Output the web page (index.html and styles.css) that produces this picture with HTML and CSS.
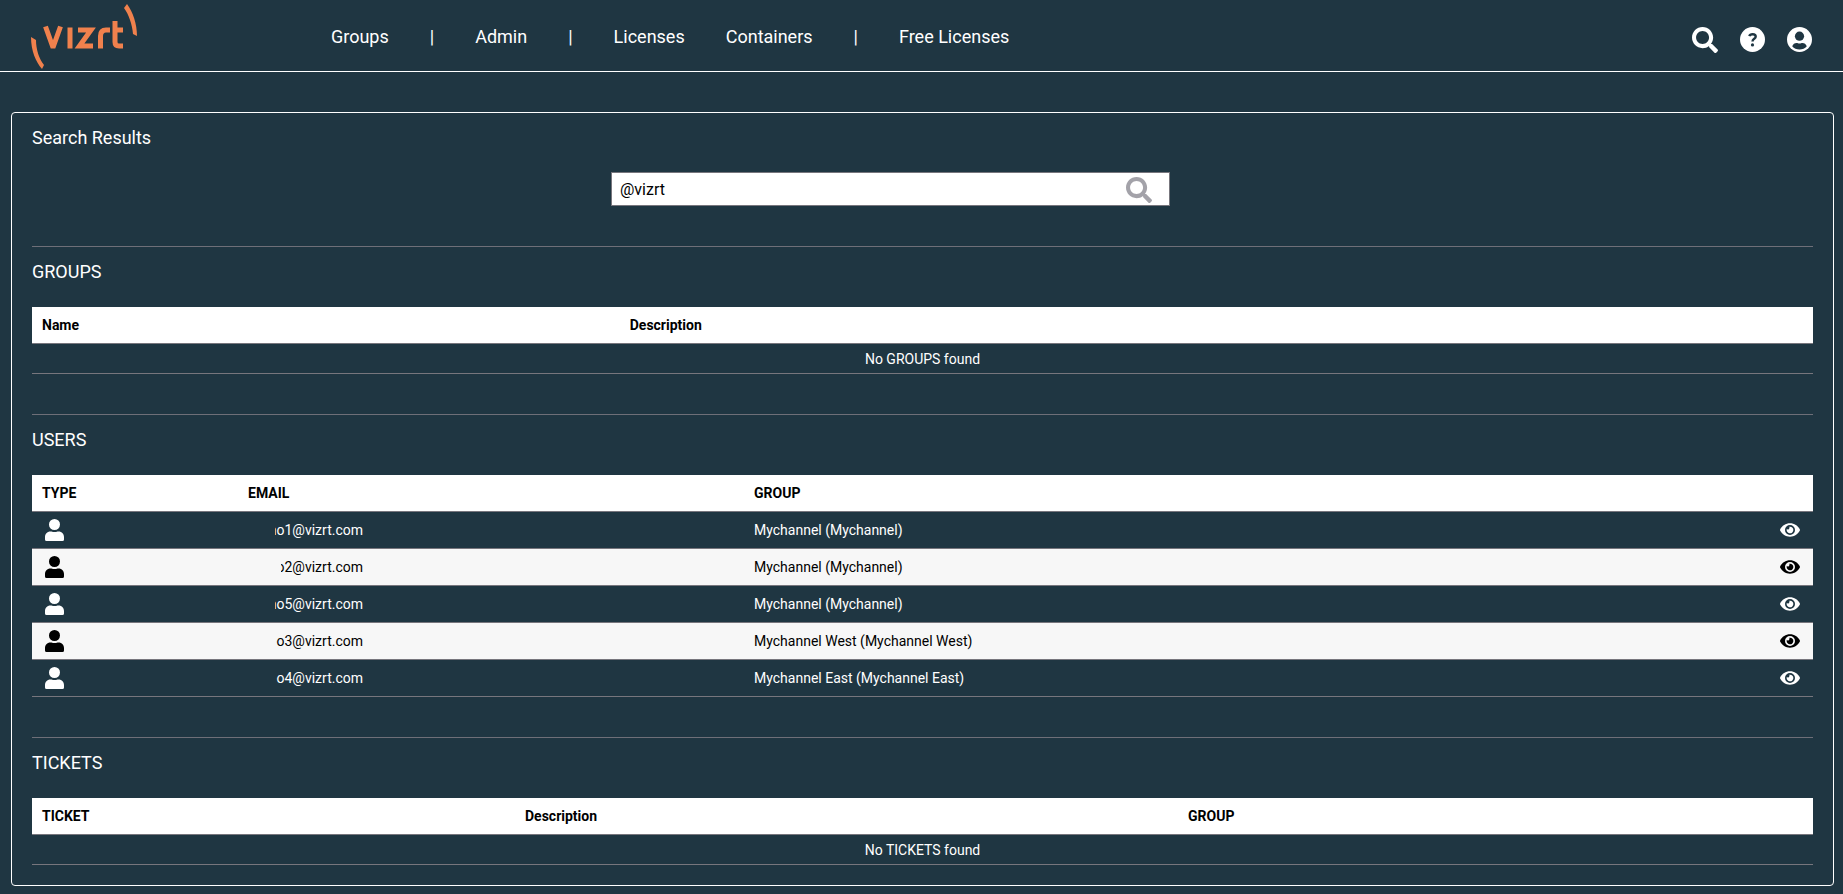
FILE: index.html
```
<!DOCTYPE html>
<html lang="en">
<head>
<meta charset="utf-8">
<title>Search Results</title>
<link rel="stylesheet" href="styles.css">
</head>
<body>
<svg class="sprite" aria-hidden="true">
  <symbol id="search" viewBox="0 0 512 512"><path d="M505 442.700L405.300 343c-4.500-4.500-10.600-7-17-7H372c27.600-35.300 44-79.700 44-128C416 93.100 322.900 0 208 0S0 93.100 0 208s93.100 208 208 208c48.300 0 92.700-16.400 128-44v16.300c0 6.400 2.500 12.500 7 17l99.700 99.700c9.400 9.400 24.600 9.400 33.900 0l28.300-28.300c9.400-9.400 9.400-24.600.1-34zM208 336c-70.700 0-128-57.200-128-128 0-70.700 57.200-128 128-128 70.700 0 128 57.200 128 128 0 70.700-57.200 128-128 128z"/></symbol>
  <symbol id="help" viewBox="0 0 25 25"><circle cx="12.500" cy="12.500" r="12.500"/><path class="cut-line" d="M9.300 9.200C9.800 7.700 11 7.200 12.600 7.200C14.500 7.200 15.700 8.200 15.700 9.700C15.700 11.800 12.500 11.900 12.500 14.400"/><circle class="cut" cx="12.500" cy="17.900" r="1.600"/></symbol>
  <symbol id="account" viewBox="0 0 25 25"><circle cx="12.500" cy="12.500" r="12.500"/><circle class="cut" cx="12.500" cy="9.200" r="4.600"/><path class="cut" d="M5.200 19.300C6 17.200 7.600 16 9.600 16C10.600 16 11.200 16.500 12.500 16.500S14.400 16 15.400 16C17.400 16 19 17.200 19.800 19.300C18 21.500 15.400 22.600 12.500 22.600S7 21.500 5.200 19.300z"/></symbol>
  <symbol id="person" viewBox="0 0 19 22"><circle cx="9.500" cy="5.500" r="5.500"/><path d="M5.500 12.400H6.500Q9.500 13.600 12.500 12.400H13.500C17 12.400 19 15 19 18V20.500Q19 22 17.500 22H1.500Q0 22 0 20.500V18C0 15 2 12.400 5.500 12.400z"/></symbol>
  <symbol id="eye" viewBox="0 0 576 400"><path fill-rule="evenodd" d="M572.500 185.400C518.300 79.600 410.900 8 288 8S57.700 79.600 3.500 185.400a32.400 32.400 0 0 0 0 29.200C57.700 320.400 165.100 392 288 392s230.300-71.600 284.500-177.400a32.400 32.400 0 0 0 0-29.200zM288 344a144 144 0 1 1 144-144 143.900 143.900 0 0 1-144 144zm0-240a95.300 95.300 0 0 0-25.300 3.800 47.900 47.900 0 0 1-66.900 66.900A95.800 95.800 0 1 0 288 104z"/></symbol>
</svg>

<header class="topbar">
  <a class="logo" href="#" aria-label="vizrt">
    <svg viewBox="0 0 106 66" width="106" height="66" aria-hidden="true">
      <path class="logo-fill" d="M0 33L5 36C5 45 8 55 13 61L11 65C5 58 0 47 0 33zM96 0C102 8 106 20 106 32L102 30C101 20 98 11 93 4z"/>
      <path class="logo-line" d="M14.500 22.500L21.500 42H22.500L29.500 22.500M39 23.500V44.500M47 26H60L48.500 42H62M69.500 44.500V32Q69.500 26 75 26H79M84 17V38Q84 42 88 42H92M84 26H92"/>
    </svg>
  </a>
  <nav class="nav">
    <a href="#">Groups</a><span>|</span><a href="#">Admin</a><span>|</span><a href="#">Licenses</a><a href="#">Containers</a><span>|</span><a href="#">Free Licenses</a>
  </nav>
  <div class="tools">
    <button type="button" aria-label="Search"><svg width="26" height="26"><use href="#search"/></svg></button>
    <button type="button" aria-label="Help"><svg width="25" height="25"><use href="#help"/></svg></button>
    <button type="button" aria-label="Account"><svg width="25" height="25"><use href="#account"/></svg></button>
  </div>
</header>

<main class="panel">
  <h1>Search Results</h1>
  <form class="search">
    <div class="search-box">
      <input type="text" value="@vizrt" aria-label="Search text">
      <button type="button" aria-label="Search"><svg width="26" height="26"><use href="#search"/></svg></button>
    </div>
  </form>

  <section>
    <h2>GROUPS</h2>
    <table class="groups">
      <thead><tr><th>Name</th><th>Description</th></tr></thead>
      <tbody><tr class="empty"><td colspan="2">No GROUPS found</td></tr></tbody>
    </table>
  </section>

  <section>
    <h2>USERS</h2>
    <table class="users">
      <thead><tr><th>TYPE</th><th>EMAIL</th><th>GROUP</th><th></th></tr></thead>
      <tbody>
        <tr><td><svg class="person"><use href="#person"/></svg></td><td><div class="email"><span class="w88">no1@vizrt.com</span></div></td><td>Mychannel (Mychannel)</td><td><button type="button" aria-label="View"><svg class="eye"><use href="#eye"/></svg></button></td></tr>
        <tr><td><svg class="person"><use href="#person"/></svg></td><td><div class="email"><span class="w82">o2@vizrt.com</span></div></td><td>Mychannel (Mychannel)</td><td><button type="button" aria-label="View"><svg class="eye"><use href="#eye"/></svg></button></td></tr>
        <tr><td><svg class="person"><use href="#person"/></svg></td><td><div class="email"><span class="w88">no5@vizrt.com</span></div></td><td>Mychannel (Mychannel)</td><td><button type="button" aria-label="View"><svg class="eye"><use href="#eye"/></svg></button></td></tr>
        <tr><td><svg class="person"><use href="#person"/></svg></td><td><div class="email"><span>o3@vizrt.com</span></div></td><td>Mychannel West (Mychannel West)</td><td><button type="button" aria-label="View"><svg class="eye"><use href="#eye"/></svg></button></td></tr>
        <tr><td><svg class="person"><use href="#person"/></svg></td><td><div class="email"><span>o4@vizrt.com</span></div></td><td>Mychannel East (Mychannel East)</td><td><button type="button" aria-label="View"><svg class="eye"><use href="#eye"/></svg></button></td></tr>
      </tbody>
    </table>
  </section>

  <section>
    <h2>TICKETS</h2>
    <table class="tickets">
      <thead><tr><th>TICKET</th><th>Description</th><th>GROUP</th></tr></thead>
      <tbody><tr class="empty"><td colspan="3">No TICKETS found</td></tr></tbody>
    </table>
  </section>
</main>
</body>
</html>
```
FILE: styles.css
```
* { box-sizing: border-box; }
body {
  margin: 0;
  background: #1f3642;
  color: #fff;
  font: 14px/20px Roboto, "Liberation Sans", sans-serif;
}
.sprite { position: absolute; width: 0; height: 0; }
svg { display: block; fill: currentColor; }
button { padding: 0; border: 0; background: none; color: inherit; }
.cut { fill: #1f3642; }
.cut-line { fill: none; stroke: #1f3642; stroke-width: 2.400; }

.topbar {
  display: flex;
  height: 72px;
  padding: 4px 31px 0;
  border-bottom: 1px solid #fff;
}
.logo-fill { fill: #f0814d; }
.logo-line { fill: none; stroke: #f0814d; stroke-width: 5; }
.nav {
  display: flex;
  gap: 41px;
  margin: 20px 0 0 194px;
  font-size: 18px;
  line-height: 26px;
}
.nav a { color: inherit; text-decoration: none; }
.tools { display: flex; gap: 22px; margin: 23px 0 0 auto; align-items: flex-start; }

.panel {
  margin: 40px 9px 9px 11px;
  padding: 12px 20px 20px;
  border: 1px solid #fff;
  border-radius: 4px;
}
h1, h2 { margin: 0; font-size: 18px; font-weight: 400; line-height: 26px; }
.search { padding: 21px 64px 40px 0; }
.search-box {
  display: flex;
  align-items: center;
  width: 559px;
  height: 34px;
  margin: 0 auto;
  padding: 1px 17px 0 0;
  background: #fff;
  border: 1px solid #77767d;
}
.search-box input {
  flex: 1;
  height: 30px;
  padding: 0 8px;
  border: 0;
  outline: 0;
  background: none;
  color: #000;
  font: 16px/24px Roboto, "Liberation Sans", sans-serif;
}
.search-box button { color: #a3a2a9; }

section { padding-top: 12px; border-top: 1px solid #6e6f78; }
section + section { margin-top: 40px; }
h2 { margin-bottom: 22px; }
table { width: 100%; table-layout: fixed; border-collapse: separate; border-spacing: 0; }
th, td { padding: 0 10px; border-bottom: 1px solid #77767d; text-align: left; }
th { height: 37px; background: #fff; color: #000; font-weight: 700; }
td { height: 37px; }
.empty td { height: 30px; text-align: center; }
.users tbody tr:nth-child(even) { background: #f7f7f7; color: #000; }
.users td:last-child button { display: block; margin: 0 3px 0 auto; }
.groups th:first-child { width: 33%; }
.users th:nth-child(1) { width: 206px; }
.users th:nth-child(2) { width: 506px; }
.users th:nth-child(4) { width: 60px; }
.tickets th:nth-child(1) { width: 483px; }
.tickets th:nth-child(2) { width: 663px; }
.person { width: 19px; height: 22px; margin-left: 3px; }
.eye { width: 20px; height: 14px; }
.email { display: flex; justify-content: flex-end; width: 115px; }
.email span { display: flex; justify-content: flex-end; overflow: hidden; }
.email .w88 { width: 88px; }
.email .w82 { width: 82px; }
```
